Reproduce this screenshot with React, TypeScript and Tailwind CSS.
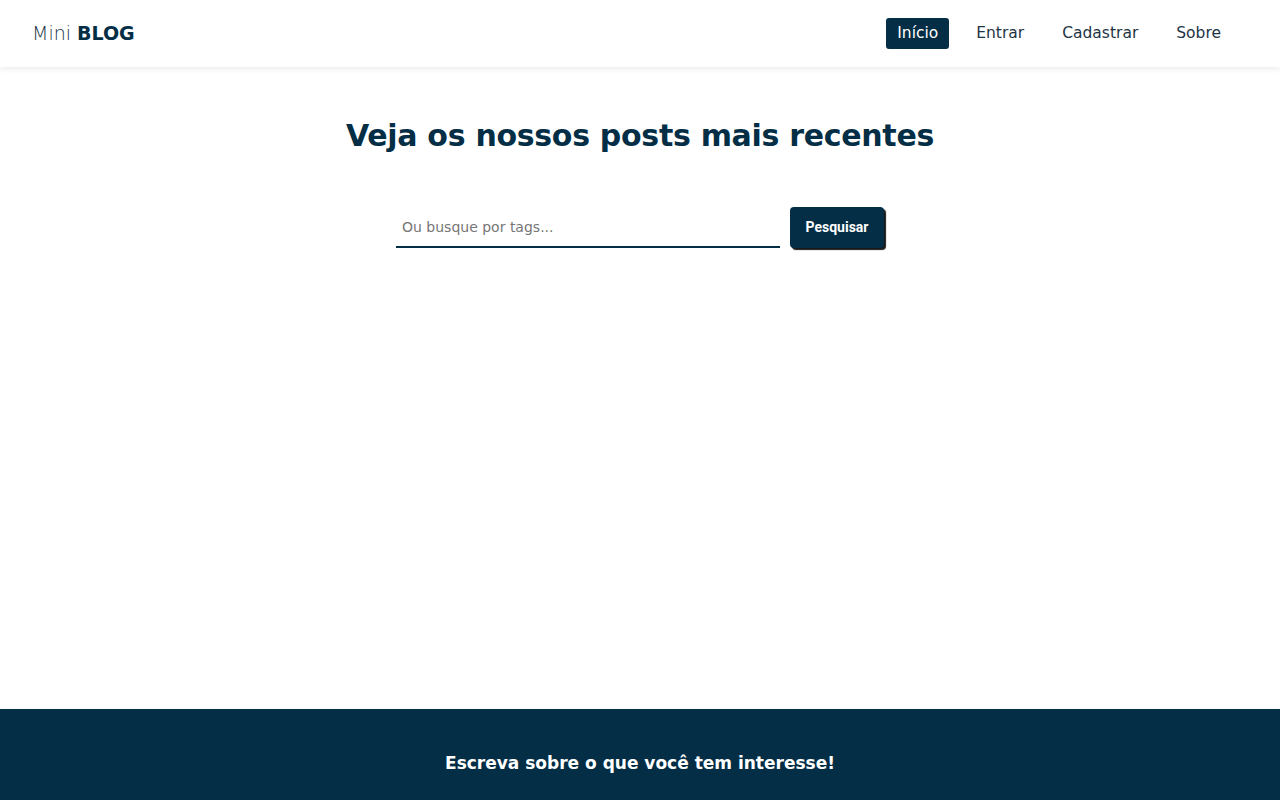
import { useState } from "react";

const links = [
  { label: "Início", active: true },
  { label: "Entrar", active: false },
  { label: "Cadastrar", active: false },
  { label: "Sobre", active: false },
];

export default function App() {
  const [query, setQuery] = useState("");

  return (
    <div className="min-h-screen bg-white font-['DejaVu_Sans',sans-serif] text-[#032e45]">
      <nav className="relative z-10 flex h-[67px] items-center justify-between pl-8 pr-[48px] shadow-[0_2px_6px_rgba(0,0,0,0.08)]">
        <a href="#" className="text-[19px] text-[#1d3444]">
          <span className="font-light">Mini </span>
          <span className="font-bold text-[#032e45]">BLOG</span>
        </a>
        <ul className="flex items-center gap-4">
          {links.map((link) => (
            <li key={link.label}>
              <a
                href="#"
                className={
                  link.active
                    ? "block rounded-[3px] bg-[#032e45] px-[11px] py-[4px] text-[15.5px] text-white"
                    : "block px-[11px] py-[4px] text-[15.5px] text-[#1d3444]"
                }
              >
                {link.label}
              </a>
            </li>
          ))}
        </ul>
      </nav>

      <main className="flex min-h-[642px] flex-col items-center pt-[46px]">
        <h1 className="text-[30px] font-bold tracking-[-0.01em]">
          Veja os nossos posts mais recentes
        </h1>
        <form
          className="mt-[49px] flex items-center gap-[10px]"
          onSubmit={(e) => e.preventDefault()}
        >
          <input
            type="text"
            value={query}
            onChange={(e) => setQuery(e.target.value)}
            placeholder="Ou busque por tags..."
            className="h-[40px] w-[384px] border-b-2 border-[#032e45] px-[6px] text-[14px] outline-none placeholder:text-[#767676]"
          />
          <button
            type="submit"
            className="h-[41px] w-[94px] rounded-[4px] bg-[#032e45] font-['Roboto',sans-serif] text-[14px] font-bold text-white shadow-[2px_2px_1px_rgba(0,0,0,0.9)]"
          >
            Pesquisar
          </button>
        </form>
      </main>

      <footer className="flex h-[200px] justify-center bg-[#032e45] pt-[42px]">
        <h3 className="text-[17px] font-bold text-white">
          Escreva sobre o que você tem interesse!
        </h3>
      </footer>
    </div>
  );
}
